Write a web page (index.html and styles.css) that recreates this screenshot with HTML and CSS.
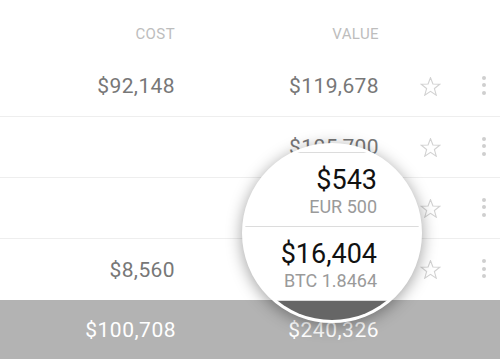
FILE: index.html
```html
<!DOCTYPE html>
<html>
<head>
<meta charset="utf-8">
<link rel="stylesheet" href="styles.css">
</head>
<body>
<div class="table">
  <div class="row head">
    <span class="cost">COST</span>
    <span class="val">VALUE</span>
  </div>
  <div class="row item">
    <span class="cost">$92,148</span>
    <span class="val">$119,678</span>
    <span class="star"><svg width="21" height="19" viewBox="0 0 20 18.5"><polygon points="10,0.6 12.35,6.76 19.03,7.06 13.8,11.24 15.58,17.69 10,14 4.42,17.69 6.2,11.24 0.97,7.06 7.65,6.76"/></svg></span>
    <span class="more"><i></i><i></i><i></i></span>
  </div>
  <div class="row item">
    <span class="cost"></span>
    <span class="val">$105,700</span>
    <span class="star"><svg width="21" height="19" viewBox="0 0 20 18.5"><polygon points="10,0.6 12.35,6.76 19.03,7.06 13.8,11.24 15.58,17.69 10,14 4.42,17.69 6.2,11.24 0.97,7.06 7.65,6.76"/></svg></span>
    <span class="more"><i></i><i></i><i></i></span>
  </div>
  <div class="row item">
    <span class="cost"></span>
    <span class="val"></span>
    <span class="star"><svg width="21" height="19" viewBox="0 0 20 18.5"><polygon points="10,0.6 12.35,6.76 19.03,7.06 13.8,11.24 15.58,17.69 10,14 4.42,17.69 6.2,11.24 0.97,7.06 7.65,6.76"/></svg></span>
    <span class="more"><i></i><i></i><i></i></span>
  </div>
  <div class="row item last">
    <span class="cost">$8,560</span>
    <span class="val"></span>
    <span class="star"><svg width="21" height="19" viewBox="0 0 20 18.5"><polygon points="10,0.6 12.35,6.76 19.03,7.06 13.8,11.24 15.58,17.69 10,14 4.42,17.69 6.2,11.24 0.97,7.06 7.65,6.76"/></svg></span>
    <span class="more"><i></i><i></i><i></i></span>
  </div>
  <div class="row foot">
    <span class="cost">$100,708</span>
    <span class="val">$240,326</span>
  </div>
</div>

<div class="lens">
  <div class="lens-inner">
    <div class="lrow"></div>
    <div class="lrow">
      <span class="big">$543</span>
      <span class="sub">EUR 500</span>
    </div>
    <div class="lrow">
      <span class="big">$16,404</span>
      <span class="sub">BTC 1.8464</span>
    </div>
    <div class="lfoot"></div>
  </div>
</div>
</body>
</html>
```

FILE: styles.css
```css
* { box-sizing: border-box; }

html, body {
  margin: 0;
  padding: 0;
  background: #ffffff;
}

body {
  width: 500px;
  height: 359px;
  overflow: hidden;
  position: relative;
  font-family: Roboto, "Noto Sans", Arial, sans-serif;
}

.table {
  display: flex;
  flex-direction: column;
}

.row {
  display: grid;
  grid-template-columns: 176px 203px 102px 1fr;
  align-items: center;
}

.cost, .val {
  text-align: right;
  white-space: nowrap;
}

.cost { padding-right: 1px; }

.head {
  height: 56px;
  align-items: end;
  padding-bottom: 13px;
  font-size: 15px;
  line-height: 18px;
  letter-spacing: 0.4px;
  color: #bdbdbd;
}

.item {
  height: 61px;
  border-bottom: 1px solid #eeeeee;
  font-size: 21px;
  line-height: 24px;
  letter-spacing: 0.4px;
  color: #777777;
}

.item.last { border-bottom: none; }

.star {
  justify-self: center;
  display: flex;
}

.star svg polygon {
  fill: none;
  stroke: #d2d2d2;
  stroke-width: 1.1;
  stroke-linejoin: miter;
}

.more {
  justify-self: start;
  margin-left: 1px;
  display: flex;
  flex-direction: column;
  gap: 3.5px;
  margin-top: -2px;
}

.more i {
  display: block;
  width: 4px;
  height: 4px;
  border-radius: 50%;
  background: #cfcfcf;
}

.foot {
  height: 59px;
  background: #b3b3b3;
  font-size: 21px;
  line-height: 24px;
  letter-spacing: 0.5px;
  color: #ffffff;
}

.foot .cost { padding-right: 0; }

/* magnifier */
.lens {
  position: absolute;
  left: 242px;
  top: 143px;
  width: 180px;
  height: 180px;
  border-radius: 50%;
  border: 3px solid #ffffff;
  background: #ffffff;
  overflow: hidden;
  box-shadow: 0 3px 16px rgba(0, 0, 0, 0.38);
}

.lens-inner {
  margin-top: -67px;
  display: flex;
  flex-direction: column;
}

.lrow {
  height: 74px;
  border-bottom: 1px solid #dcdcdc;
  display: flex;
  flex-direction: column;
  align-items: flex-end;
  padding-top: 12px;
  padding-right: 42px;
}

.big {
  font-size: 27px;
  line-height: 30px;
  color: #111111;
  white-space: nowrap;
}

.sub {
  margin-top: 1px;
  font-size: 18px;
  line-height: 22px;
  color: #9a9a9a;
  white-space: nowrap;
}

.lfoot {
  height: 74px;
  background: #666666;
}
```
